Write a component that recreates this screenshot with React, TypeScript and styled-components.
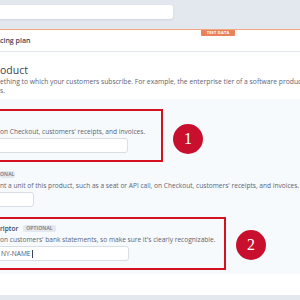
import { FC } from 'react';
import styled, { createGlobalStyle } from 'styled-components';

const GlobalStyle = createGlobalStyle`
  html, body {
    margin: 0;
    padding: 0;
    background: #ffffff;
  }
  body {
    font-family: 'Open Sans', 'Noto Sans', sans-serif;
    color: #3c4257;
  }
`;

interface IFieldProps {
  marker?: number;
  width?: number;
  inputWidth: number;
  label?: string;
  badge?: string;
  description: string;
  value?: string;
  cursor?: boolean;
}

const Field: FC<IFieldProps> = ({ marker, width, inputWidth, label, badge, description, value, cursor }) => (
  <FieldRow>
    <FieldBox $marked={!!marker} $width={width}>
      <LabelRow>
        {label && <Label>{label}</Label>}
        {badge && <Badge $cut={!label}>{badge}</Badge>}
      </LabelRow>
      <Help>{description}</Help>
      <Input $width={inputWidth}>
        {value}
        {cursor && <Caret />}
      </Input>
    </FieldBox>
    {marker && <Marker $shift={marker === 1 ? 6 : 3}>{marker}</Marker>}
  </FieldRow>
);

export default function App() {
  return (
    <Page>
      <GlobalStyle />
      <TopBar>
        <Search />
      </TopBar>
      <Header>
        <TestBadge>TEST DATA</TestBadge>
        <HeaderTitle>cing plan</HeaderTitle>
      </Header>
      <Intro>
        <Heading>oduct</Heading>
        <IntroText>
          ething to which your customers subscribe. For example, the enterprise tier of a software product
          <br />
          s.
        </IntroText>
      </Intro>
      <Form>
        <Field
          marker={1}
          width={183}
          inputWidth={138}
          description="on Checkout, customers' receipts, and invoices."
        />
        <Field
          inputWidth={44}
          badge="ONAL"
          description="nt a unit of this product, such as a seat or API call, on Checkout, customers' receipts, and invoices."
        />
        <Field
          marker={2}
          width={246}
          inputWidth={139}
          label="riptor"
          badge="OPTIONAL"
          description="on customers' bank statements, so make sure it's clearly recognizable."
          value="NY-NAME"
          cursor
        />
      </Form>
      <Footer />
      <BottomBar />
    </Page>
  );
}

const Page = styled.div`
  width: 300px;
  height: 300px;
  overflow: hidden;
  display: flex;
  flex-direction: column;
`;

const TopBar = styled.div`
  height: 30px;
  flex-shrink: 0;
  background: #e3e8ee;
  padding-top: 5px;
  box-sizing: border-box;
  border-bottom: 1px solid #f1a883;
`;

const Search = styled.div`
  width: 173px;
  height: 14px;
  margin-left: -10px;
  padding-left: 10px;
  background: #ffffff;
  border-radius: 3px;
  box-shadow: 0 1px 2px rgba(60, 66, 87, 0.12);
`;

const Header = styled.div`
  position: relative;
  height: 21px;
  flex-shrink: 0;
  display: flex;
  align-items: center;
  border-bottom: 1px solid #e3e8ee;
`;

const TestBadge = styled.div`
  position: absolute;
  left: 201px;
  top: 0;
  width: 34px;
  height: 6px;
  background: #e8825a;
  border-radius: 0 0 1px 1px;
  color: #ffffff;
  font-size: 4px;
  font-weight: 700;
  line-height: 6px;
  text-align: center;
  letter-spacing: 0.2px;
`;

const HeaderTitle = styled.div`
  font-size: 7px;
  font-weight: 600;
  color: #3c4257;
`;

const Intro = styled.div`
  height: 47px;
  flex-shrink: 0;
  padding-top: 12px;
  box-sizing: border-box;
`;

const Heading = styled.div`
  font-size: 10.5px;
  line-height: 13px;
  color: #3c4257;
`;

const IntroText = styled.div`
  font-size: 6.75px;
  line-height: 9px;
  color: #5d6473;
  white-space: nowrap;
`;

const Form = styled.div`
  background: #f7fafc;
  padding: 10px 0 4px;
  display: flex;
  flex-direction: column;
  gap: 1px;
  flex-shrink: 0;
`;

const FieldRow = styled.div`
  display: flex;
  gap: 10px;
`;

const FieldBox = styled.div<{ $marked: boolean; $width?: number }>`
  width: ${({ $width }) => ($width ? `${$width}px` : 'auto')};
  margin-left: -20px;
  padding: 0 0 0 18px;
  height: 53px;
  box-sizing: border-box;
  border: 2px solid ${({ $marked }) => ($marked ? '#d4111e' : 'transparent')};
  display: flex;
  flex-direction: column;
  white-space: nowrap;
`;

const LabelRow = styled.div`
  height: 14px;
  margin-top: 2px;
  display: flex;
  align-items: center;
  gap: 5px;
`;

const Label = styled.span`
  font-size: 6.6px;
  font-weight: 600;
  color: #3c4257;
`;

const Badge = styled.span<{ $cut: boolean }>`
  font-size: 5px;
  font-weight: 600;
  color: #697386;
  background: #e3e8ee;
  border-radius: 2px;
  padding: 0 ${({ $cut }) => ($cut ? '1px 0 0' : '3px')};
  line-height: 7px;
  letter-spacing: 0.15px;
`;

const Help = styled.div`
  font-size: 6.6px;
  line-height: 10px;
  color: #5d6473;
`;

const Input = styled.div<{ $width: number }>`
  width: ${({ $width }) => $width}px;
  height: 15px;
  margin-left: -10px;
  padding-left: 10px;
  margin-top: 1px;
  box-sizing: border-box;
  background: #ffffff;
  border: 1px solid #d8dee4;
  border-radius: 3px;
  font-size: 6.6px;
  line-height: 13px;
  color: #4f566b;
  display: flex;
  align-items: center;
`;

const Caret = styled.span`
  width: 1px;
  height: 8px;
  background: #3c4257;
  margin-left: 1px;
`;

const Marker = styled.div<{ $shift: number }>`
  width: 30px;
  height: 30px;
  border-radius: 50%;
  align-self: center;
  margin-top: ${({ $shift }) => $shift}px;
  background: #c8102e;
  color: #ffffff;
  font-family: 'Liberation Serif', 'DejaVu Serif', serif;
  font-size: 16px;
  display: flex;
  align-items: center;
  justify-content: center;
`;

const Footer = styled.div`
  flex: 1;
  background: #ffffff;
`;

const BottomBar = styled.div`
  height: 5px;
  flex-shrink: 0;
  background: #e3e8ee;
`;
